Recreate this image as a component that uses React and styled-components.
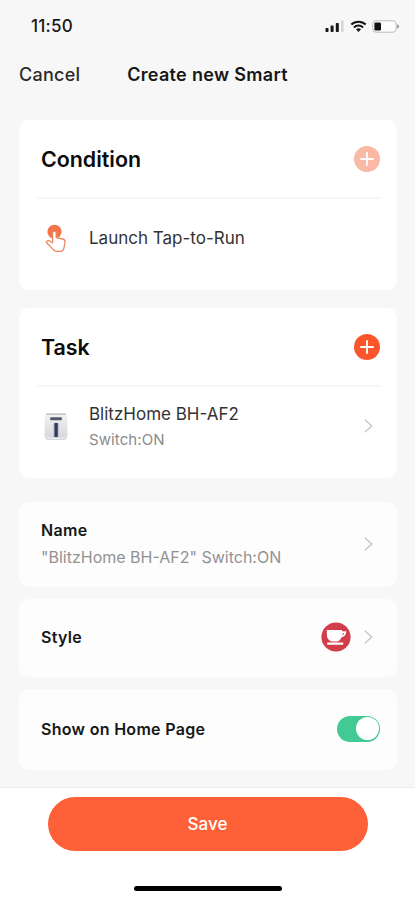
import React, { useState } from 'react'
import styled, { createGlobalStyle } from 'styled-components'

const GlobalStyles = createGlobalStyle`
  * {
    box-sizing: border-box;
  }
  body {
    margin: 0;
    background: #f7f7f7;
    font-family: Inter, "Liberation Sans", sans-serif;
    color: #171717;
  }
  button {
    font-family: inherit;
    border: none;
    padding: 0;
    background: none;
    cursor: pointer;
  }
`

const SignalIcon = () => (
  <svg width="20" height="14" viewBox="0 0 20 14">
    <rect x="0.5" y="9" width="3" height="4" rx="0.8" fill="#171717" />
    <rect x="5.6" y="6.6" width="3" height="6.4" rx="0.8" fill="#171717" />
    <rect x="10.8" y="4" width="3" height="9" rx="0.8" fill="#171717" />
    <rect x="16" y="1.5" width="2.6" height="11.5" rx="0.8" fill="#d6d6d6" />
  </svg>
)

const WifiIcon = () => (
  <svg width="17" height="13" viewBox="0 0 17 13" fill="none" stroke="#171717">
    <path d="M1.3 4.6A10.4 10.4 0 0 1 15.7 4.6" strokeWidth="2.1" />
    <path d="M3.9 7.4A6.8 6.8 0 0 1 13.1 7.4" strokeWidth="2" />
    <path d="M6 9.3A3.9 3.9 0 0 1 11 9.3L8.5 12Z" fill="#171717" stroke="none" />
  </svg>
)

const BatteryIcon = () => (
  <svg width="28" height="13" viewBox="0 0 28 13">
    <rect x="0.8" y="0.8" width="23.4" height="11.4" rx="3.2" fill="#fdfdfd" stroke="#bdbdbd" />
    <rect x="2.4" y="2.4" width="6.6" height="8.2" rx="1.4" fill="#111" />
    <path d="M25.2 4.2Q27 5 27 6.5T25.2 8.8Z" fill="#8b8b8b" />
  </svg>
)

const PlusIcon = () => (
  <svg width="14" height="14" viewBox="0 0 14 14" stroke="#fff" strokeWidth="1.8">
    <path d="M7 0.3V13.7M0.3 7H13.7" />
  </svg>
)

const Chevron = () => (
  <svg width="9" height="14" viewBox="0 0 9 14" fill="none" stroke="#c6c6c6" strokeWidth="1.3">
    <path d="M0.8 0.7L7.8 7L0.8 13.3" />
  </svg>
)

const TapIcon = () => (
  <svg width="22" height="29" viewBox="0 0 22 29">
    <circle cx="9.5" cy="7.8" r="7.1" fill="#f4734a" />
    <path
      d="M7.6 17.5V9.2Q7.6 7.2 9.4 7.2T11.2 9.2V13.6L17.8 15Q20.2 15.6 20 18L19.2 22.8Q18.6 27.3 15.5 27.3H11.8Q9.8 27.3 8.3 25.6L1.6 18.8Q1 17.6 2.4 16.9Q3.7 16.3 5.2 17.2L7.6 18.8Z"
      fill="#fff"
      stroke="#ee865f"
      strokeWidth="1.3"
      strokeLinejoin="round" />
  </svg>
)

const DeviceIcon = () => (
  <svg width="24" height="29" viewBox="0 0 24 29">
    <defs>
      <linearGradient id="body" x1="0" y1="0" x2="0" y2="1">
        <stop offset="0" stopColor="#f3f3f4" />
        <stop offset="1" stopColor="#d5d6da" />
      </linearGradient>
    </defs>
    <path d="M2.4 1.2H21.6L23.4 6V23.5Q23.4 28 18.5 28H5.5Q0.6 28 0.6 23.5V6Z" fill="url(#body)" />
    <path d="M2 1.2H22V3H2Z" fill="#c9cacd" />
    <path d="M2.2 24Q3.6 26.4 7 26.4H17Q20.4 26.4 21.8 24" fill="none" stroke="#f2f2f4" strokeWidth="1" />
    <rect x="6.2" y="5.2" width="11.6" height="3" rx="0.6" fill="#53586b" />
    <rect x="9" y="10.4" width="6.2" height="15.4" rx="2" fill="#c3c9dc" />
    <rect x="10.4" y="11" width="3.4" height="14" rx="0.8" fill="#343b5a" />
  </svg>
)

const CupIcon = () => (
  <svg width="30" height="30" viewBox="0 0 30 30">
    <circle cx="15" cy="15" r="14.6" fill="#d23d4b" />
    <path
      d="M5.8 8H21V9.3H25.2Q25.4 14.2 20.6 15.2Q19.3 18.8 16.2 19.4H10.6Q5.8 18 5.8 12Z"
      fill="#fff" />
    <path d="M21.6 11.2H23.2Q23 12.6 21.5 13Z" fill="#d23d4b" />
    <rect x="6" y="20.6" width="16.4" height="2.1" rx="1" fill="#fff" />
  </svg>
)

const App = () => {
  const [showOnHome, setShowOnHome] = useState(true)

  return (
    <>
      <GlobalStyles />
      <Screen>
        <StatusBar>
          <Time>11:50</Time>
          <StatusIcons>
            <SignalIcon />
            <WifiIcon />
            <BatteryIcon />
          </StatusIcons>
        </StatusBar>

        <NavBar>
          <Cancel>Cancel</Cancel>
          <Title>Create new Smart</Title>
        </NavBar>

        <Content>
          <Card>
            <CardHeader>
              <Heading>Condition</Heading>
              <AddButton $faded aria-label="Add condition">
                <PlusIcon />
              </AddButton>
            </CardHeader>
            <CardRow>
              <IconSlot><TapIcon /></IconSlot>
              <RowTitle>Launch Tap-to-Run</RowTitle>
            </CardRow>
          </Card>

          <Card>
            <CardHeader>
              <Heading>Task</Heading>
              <AddButton aria-label="Add task">
                <PlusIcon />
              </AddButton>
            </CardHeader>
            <CardRow>
              <IconSlot><DeviceIcon /></IconSlot>
              <RowText>
                <RowTitle>BlitzHome BH-AF2</RowTitle>
                <RowNote>Switch:ON</RowNote>
              </RowText>
              <Chevron />
            </CardRow>
          </Card>

          <Settings>
            <Setting $height="85px">
              <SettingText>
                <Label>Name</Label>
                <Value>"BlitzHome BH-AF2" Switch:ON</Value>
              </SettingText>
              <Chevron />
            </Setting>
            <Setting $height="78px">
              <Label>Style</Label>
              <StyleValue>
                <CupIcon />
                <Chevron />
              </StyleValue>
            </Setting>
            <Setting $height="81px" $toggle>
              <Label>Show on Home Page</Label>
              <Toggle
                role="switch"
                aria-checked={showOnHome}
                aria-label="Show on Home Page"
                $on={showOnHome}
                onClick={() => setShowOnHome(!showOnHome)}>
                <Knob />
              </Toggle>
            </Setting>
          </Settings>
        </Content>

        <Footer>
          <SaveButton>Save</SaveButton>
          <HomeIndicator />
        </Footer>
      </Screen>
    </>
  )
}

export default App

const Screen = styled.div`
  display: flex;
  flex-direction: column;
  width: 100%;
  height: 900px;
  overflow: hidden;
`

const StatusBar = styled.div`
  display: flex;
  justify-content: space-between;
  align-items: center;
  height: 52px;
  padding: 0 15px 0 31px;
`

const Time = styled.span`
  font-size: 17px;
  font-weight: 500;
  letter-spacing: 0.25px;
`

const StatusIcons = styled.div`
  display: flex;
  align-items: center;
  gap: 5px;
`

const NavBar = styled.header`
  display: grid;
  grid-template-columns: 1fr auto 1fr;
  align-items: center;
  height: 44px;
  padding: 0 19px;
`

const Cancel = styled.button`
  justify-self: start;
  font-size: 18px;
  font-weight: 500;
  letter-spacing: 0.25px;
  color: #2b2b2b;
`

const Title = styled.h1`
  margin: 0;
  font-size: 18px;
  font-weight: 600;
  letter-spacing: 0.32px;
`

const Content = styled.main`
  display: flex;
  flex-direction: column;
  gap: 18px;
  flex: 1;
  padding: 24px 18px 0 19px;
`

const Card = styled.section`
  height: 170px;
  padding: 0 17px 0 18px;
  border-radius: 10px;
  background: #fff;
`

const CardHeader = styled.div`
  display: flex;
  justify-content: space-between;
  align-items: center;
  height: 79px;
  padding-left: 4px;
  border-bottom: 2px solid #f6f6f6;
`

const Heading = styled.h2`
  margin: 0;
  padding-top: 1px;
  font-size: 21.4px;
  font-weight: 600;
  color: #0c0c0c;
`

const AddButton = styled.button`
  display: flex;
  align-items: center;
  justify-content: center;
  width: 26px;
  height: 26px;
  border-radius: 50%;
  background: ${(props) => (props.$faded ? '#fab9a4' : '#f9572b')};
`

const CardRow = styled.div`
  display: flex;
  align-items: center;
  height: 78px;
  padding-right: 7px;
`

const IconSlot = styled.div`
  display: flex;
  justify-content: center;
  width: 38px;
  margin-right: 14px;
`

const RowText = styled.div`
  display: flex;
  flex-direction: column;
  gap: 4px;
  flex: 1;
`

const RowTitle = styled.span`
  font-size: 17px;
  line-height: 24px;
  color: #333;
`

const RowNote = styled.span`
  font-size: 15px;
  line-height: 20px;
  letter-spacing: 0.1px;
  color: #8b8b8b;
`

const Settings = styled.div`
  display: flex;
  flex-direction: column;
  gap: 12px;
  padding-top: 6px;
`

const Setting = styled.section`
  display: flex;
  justify-content: space-between;
  align-items: center;
  height: ${(props) => props.$height};
  padding: 0 ${(props) => (props.$toggle ? '17px' : '24px')} 2px 22px;
  border-radius: 10px;
  background: #fdfdfd;
`

const SettingText = styled.div`
  display: flex;
  flex-direction: column;
  gap: 6px;
  padding-bottom: 2px;
`

const Label = styled.span`
  font-size: 16px;
  line-height: 22px;
  font-weight: 600;
  letter-spacing: 0.3px;
`

const Value = styled.span`
  font-size: 16px;
  line-height: 20px;
  color: #929292;
`

const StyleValue = styled.div`
  display: flex;
  align-items: center;
  gap: 13px;
`

const Toggle = styled.button`
  display: flex;
  align-items: center;
  justify-content: ${(props) => (props.$on ? 'flex-end' : 'flex-start')};
  width: 43px;
  height: 26px;
  padding: 0 1.5px;
  border-radius: 13px;
  background: ${(props) => (props.$on ? '#42c994' : '#ddd')};
`

const Knob = styled.span`
  width: 23px;
  height: 23px;
  border-radius: 50%;
  background: #fff;
`

const Footer = styled.footer`
  display: flex;
  flex-direction: column;
  align-items: center;
  height: 113px;
  padding-top: 9px;
  border-top: 1px solid #eee;
  background: #fff;
`

const SaveButton = styled.button`
  width: 320px;
  height: 54px;
  border-radius: 27px;
  background: #fe6037;
  color: #fff;
  font-size: 17px;
  font-weight: 500;
`

const HomeIndicator = styled.div`
  width: 148px;
  height: 5px;
  margin-top: 35px;
  border-radius: 3px;
  background: #000;
`
